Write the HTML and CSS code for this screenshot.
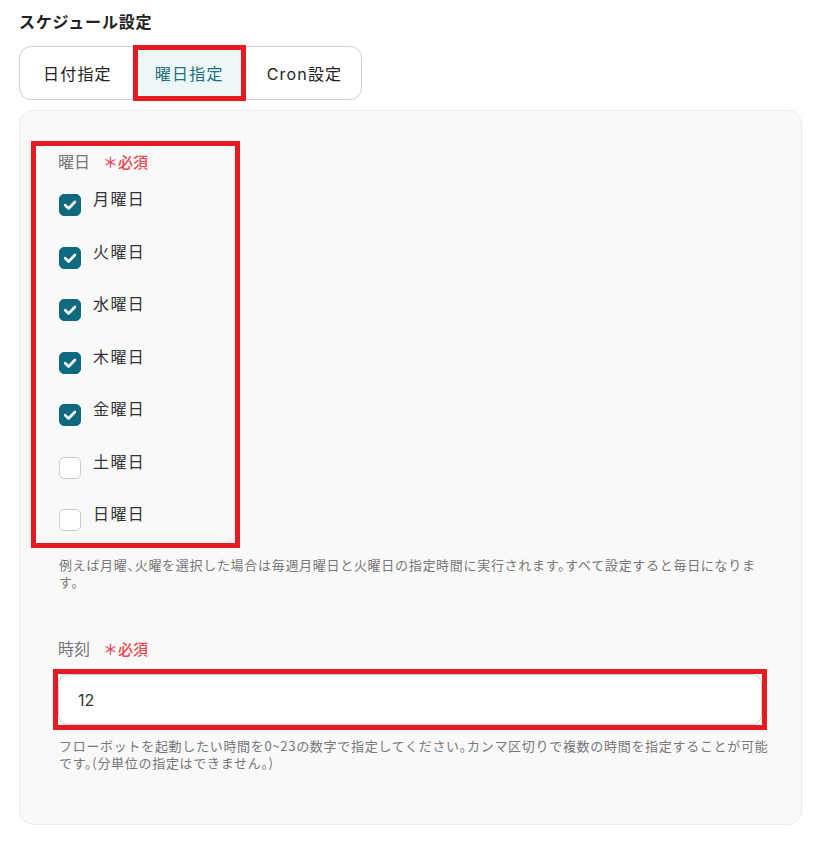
FILE: index.html
```html
<!DOCTYPE html>
<html lang="ja">
<head>
<meta charset="utf-8">
<title>スケジュール設定</title>
<link rel="stylesheet" href="styles.css">
</head>
<body>
<div class="page">
  <h2 class="title">スケジュール設定</h2>
  <div class="tabs">
    <div class="tab">日付指定</div>
    <div class="tab tab-active">曜日指定</div>
    <div class="tab">Cron設定</div>
  </div>
  <div class="panel">
    <div class="mark mark-days">
      <div class="label">曜日<span class="req">＊必須</span></div>
      <div class="days">
        <label class="day"><span class="cb cb-on"><svg viewBox="0 0 22 22" width="22" height="22"><path d="M6.2 11.2 L9.6 14.5 L15.9 8" fill="none" stroke="#fff" stroke-width="2.6" stroke-linecap="round" stroke-linejoin="round"/></svg></span><span class="day-text">月曜日</span></label>
        <label class="day"><span class="cb cb-on"><svg viewBox="0 0 22 22" width="22" height="22"><path d="M6.2 11.2 L9.6 14.5 L15.9 8" fill="none" stroke="#fff" stroke-width="2.6" stroke-linecap="round" stroke-linejoin="round"/></svg></span><span class="day-text">火曜日</span></label>
        <label class="day"><span class="cb cb-on"><svg viewBox="0 0 22 22" width="22" height="22"><path d="M6.2 11.2 L9.6 14.5 L15.9 8" fill="none" stroke="#fff" stroke-width="2.6" stroke-linecap="round" stroke-linejoin="round"/></svg></span><span class="day-text">水曜日</span></label>
        <label class="day"><span class="cb cb-on"><svg viewBox="0 0 22 22" width="22" height="22"><path d="M6.2 11.2 L9.6 14.5 L15.9 8" fill="none" stroke="#fff" stroke-width="2.6" stroke-linecap="round" stroke-linejoin="round"/></svg></span><span class="day-text">木曜日</span></label>
        <label class="day"><span class="cb cb-on"><svg viewBox="0 0 22 22" width="22" height="22"><path d="M6.2 11.2 L9.6 14.5 L15.9 8" fill="none" stroke="#fff" stroke-width="2.6" stroke-linecap="round" stroke-linejoin="round"/></svg></span><span class="day-text">金曜日</span></label>
        <label class="day"><span class="cb"></span><span class="day-text">土曜日</span></label>
        <label class="day"><span class="cb"></span><span class="day-text">日曜日</span></label>
      </div>
    </div>
    <p class="help help-days">例えば月曜、火曜を選択した場合は毎週月曜日と火曜日の指定時間に実行されます。すべて設定すると毎日になります。</p>

    <div class="label label-time">時刻<span class="req">＊必須</span></div>
    <div class="mark mark-input">
      <div class="input">12</div>
    </div>
    <p class="help">フローボットを起動したい時間を0~23の数字で指定してください。カンマ区切りで複数の時間を指定することが可能です。(分単位の指定はできません。)</p>
  </div>
</div>
</body>
</html>
```

FILE: styles.css
```css
* { box-sizing: border-box; }
html, body { margin: 0; padding: 0; background: #ffffff; }
body {
  font-family: Inter, "Noto Sans CJK JP", "Noto Sans", sans-serif;
  color: #2b2b2b;
}
.page {
  width: 826px;
  padding: 12px 24px 0 19px;
}
.title {
  margin: 0;
  font-size: 16px;
  line-height: 20px;
  font-weight: 600;
  letter-spacing: 0.8px;
  color: #222;
}
.tabs {
  margin-top: 14px;
  display: inline-flex;
  gap: 9px;
  padding: 3px 2px 3px 6px;
  border: 1px solid #cfcfcf;
  border-radius: 12px;
  background: #fff;
}
.tab {
  height: 46px;
  padding: 0 17px;
  display: flex;
  align-items: center;
  font-size: 16px;
  letter-spacing: 1.2px;
  color: #222;
  border-radius: 8px;
}
.tab-active {
  background: #eef7f7;
  color: #1d6e80;
  outline: 5px solid #e41c22;
  outline-offset: 0;
  border-radius: 0;
}
.panel {
  margin-top: 10px;
  width: 783px;
  background: #f9f9f9;
  border: 1px solid #ececec;
  border-radius: 14px;
  padding: 30px 38px 53px 38px;
}
.mark {
  border: 5px solid #e41c22;
}
.mark-days {
  width: 209px;
  margin-left: -27px;
  padding: 6px 0 17px 22px;
}
.label {
  font-size: 16px;
  line-height: 20px;
  color: #737373;
  display: flex;
  align-items: baseline;
}
.req {
  margin-left: 13px;
  font-size: 15px;
  font-weight: 500;
  color: #ea4750;
}
.days {
  margin-top: 14px;
  display: flex;
  flex-direction: column;
  gap: 28.5px;
}
.day {
  display: flex;
  align-items: flex-start;
  height: 24px;
}
.cb {
  width: 22px;
  height: 22px;
  margin-top: 7px;
  margin-left: 1px;
  border-radius: 5px;
  border: 1px solid #cccccc;
  background: #fff;
  display: block;
  flex: none;
}
.cb-on {
  background: #0f6a80;
  border-color: #0f6a80;
}
.cb-on svg { display: block; margin: -1px; }
.day-text {
  margin-left: 12px;
  font-size: 16px;
  line-height: 24px;
  letter-spacing: 1.4px;
  color: #333;
}
.help {
  margin: 8px -7px 0 1px;
  font-family: "Noto Sans CJK JP", "Noto Sans", sans-serif;
  font-size: 13px;
  line-height: 16.5px;
  letter-spacing: 0.7px;
  font-feature-settings: "halt";
  color: #777;
}
.help-days { margin-top: 9px; }
.label-time {
  margin-top: 49px;
}
.mark-input {
  margin: 9px -4px 0 -5px;
}
.input {
  height: 51px;
  background: #fff;
  border: 1px solid #cccccc;
  border-radius: 10px;
  padding: 0 19px;
  display: flex;
  align-items: center;
  font-size: 16px;
  color: #333;
}
```
